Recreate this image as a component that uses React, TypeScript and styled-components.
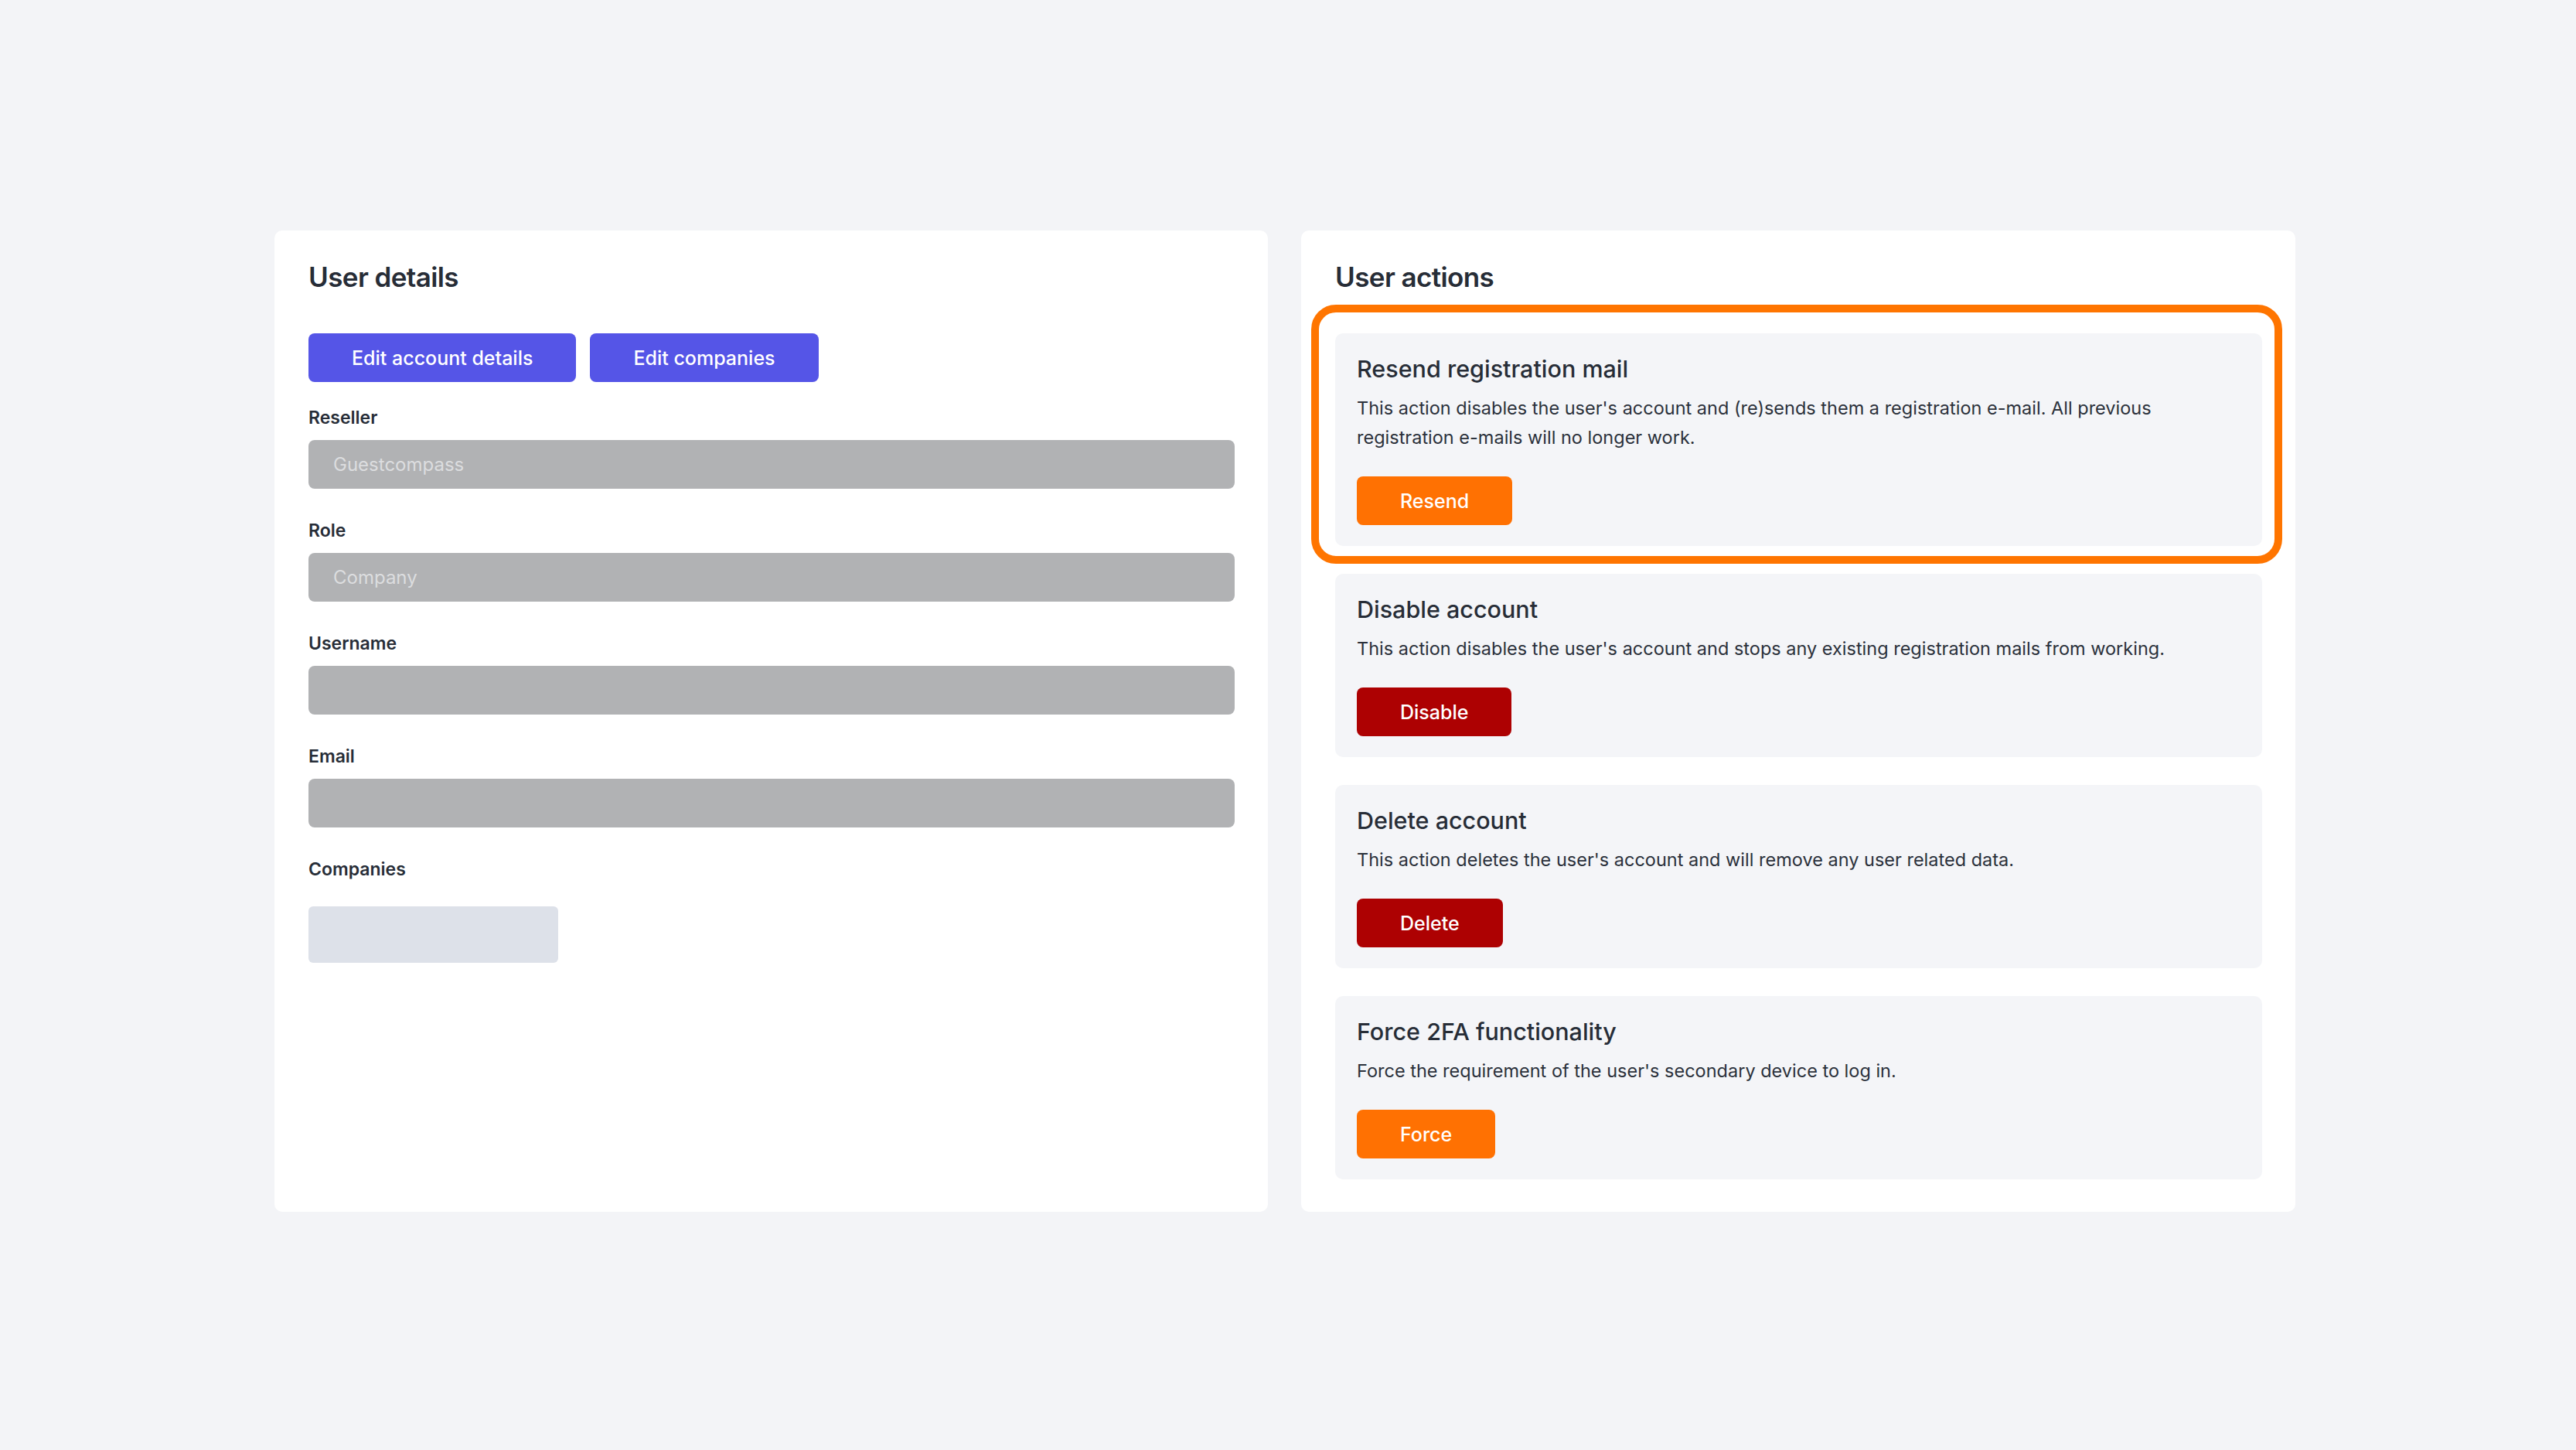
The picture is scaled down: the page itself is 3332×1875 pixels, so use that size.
import styled, { createGlobalStyle } from "styled-components";

const GlobalStyle = createGlobalStyle`
  * {
    box-sizing: border-box;
  }

  html,
  body {
    margin: 0;
    padding: 0;
    background: #f3f4f7;
  }

  body {
    font-family: Inter, "Noto Sans", sans-serif;
    color: #2a303a;
  }
`;

type Tone = "primary" | "warning" | "danger";

const toneColors: Record<Tone, string> = {
  primary: "#5555e7",
  warning: "#ff7102",
  danger: "#ad0102",
};

const fields = [
  { label: "Reseller", value: "Guestcompass" },
  { label: "Role", value: "Company" },
  { label: "Username", value: "" },
  { label: "Email", value: "" },
];

const actions: {
  title: string;
  text: string;
  button: string;
  tone: Tone;
  highlighted?: boolean;
}[] = [
  {
    title: "Resend registration mail",
    text: "This action disables the user's account and (re)sends them a registration e-mail. All previous registration e-mails will no longer work.",
    button: "Resend",
    tone: "warning",
    highlighted: true,
  },
  {
    title: "Disable account",
    text: "This action disables the user's account and stops any existing registration mails from working.",
    button: "Disable",
    tone: "danger",
  },
  {
    title: "Delete account",
    text: "This action deletes the user's account and will remove any user related data.",
    button: "Delete",
    tone: "danger",
  },
  {
    title: "Force 2FA functionality",
    text: "Force the requirement of the user's secondary device to log in.",
    button: "Force",
    tone: "warning",
  },
];

export default function App() {
  return (
    <>
      <GlobalStyle />
      <Page>
        <Columns>
          <Card>
            <CardTitle>User details</CardTitle>
            <ButtonRow>
              <Button $tone="primary">Edit account details</Button>
              <Button $tone="primary">Edit companies</Button>
            </ButtonRow>
            <Fields>
              {fields.map((field) => (
                <Field key={field.label}>
                  <Label>{field.label}</Label>
                  <Input readOnly value={field.value} />
                </Field>
              ))}
              <Field>
                <Label>Companies</Label>
                <CompaniesBox />
              </Field>
            </Fields>
          </Card>

          <Card>
            <CardTitle>User actions</CardTitle>
            <ActionList>
              {actions.map((action) => (
                <ActionBox key={action.title}>
                  {action.highlighted && <Highlight />}
                  <ActionTitle>{action.title}</ActionTitle>
                  <ActionText>{action.text}</ActionText>
                  <Button $tone={action.tone}>{action.button}</Button>
                </ActionBox>
              ))}
            </ActionList>
          </Card>
        </Columns>
      </Page>
    </>
  );
}

const Page = styled.main`
  min-height: 1875px;
  padding: 298px 363px 0 355px;
`;

const Columns = styled.div`
  display: grid;
  grid-template-columns: 1285px 1286px;
  column-gap: 43px;
  align-items: stretch;
`;

const Card = styled.section`
  background: #ffffff;
  border-radius: 10px;
  padding: 38px 43px 42px 44px;
`;

const CardTitle = styled.h2`
  margin: 0 0 51px;
  font-size: 35px;
  line-height: 44px;
  font-weight: 600;
  letter-spacing: -0.6px;
  color: #272d37;
`;

const ButtonRow = styled.div`
  display: flex;
  column-gap: 18px;
  margin-bottom: 32px;
`;

const Button = styled.button<{ $tone: Tone }>`
  height: 63px;
  padding: 0 56px;
  border: none;
  border-radius: 8px;
  background: ${({ $tone }) => toneColors[$tone]};
  color: #ffffff;
  font-family: inherit;
  font-size: 25px;
  font-weight: 500;
  cursor: pointer;
`;

const Fields = styled.div`
  display: flex;
  flex-direction: column;
  row-gap: 40px;
`;

const Field = styled.div`
  display: flex;
  flex-direction: column;
  align-items: flex-start;
`;

const Label = styled.label`
  margin-bottom: 15px;
  font-size: 23px;
  line-height: 28px;
  font-weight: 600;
  color: #272d37;
`;

const Input = styled.input`
  width: 100%;
  height: 63px;
  padding: 0 32px;
  border: none;
  outline: none;
  border-radius: 8px;
  background: #b1b2b4;
  color: #dcdddf;
  font-family: inherit;
  font-size: 24px;
`;

const CompaniesBox = styled.div`
  width: 323px;
  height: 73px;
  margin-top: 19px;
  border-radius: 6px;
  background: #dde1e9;
`;

const ActionList = styled.div`
  display: flex;
  flex-direction: column;
  row-gap: 36px;
`;

const ActionBox = styled.div`
  position: relative;
  padding: 28px 28px 27px;
  border-radius: 10px;
  background: #f4f5f8;
`;

const Highlight = styled.span`
  position: absolute;
  top: -37px;
  left: -31px;
  right: -26px;
  bottom: -23px;
  border: 10px solid #ff7500;
  border-radius: 32px;
  pointer-events: none;
`;

const ActionTitle = styled.h3`
  margin: 0 0 14px;
  font-size: 30.5px;
  line-height: 36px;
  font-weight: 500;
  color: #272d37;
`;

const ActionText = styled.p`
  margin: 0 0 31px;
  font-size: 23.5px;
  line-height: 38px;
  color: #2b313b;
`;
